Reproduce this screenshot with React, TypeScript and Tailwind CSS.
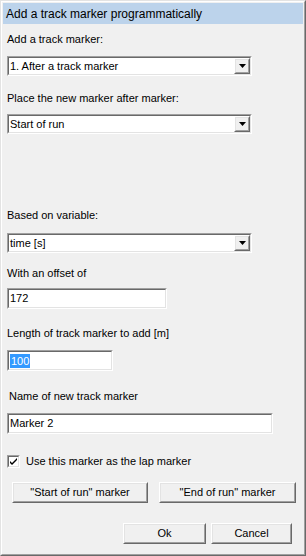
import type { ReactNode } from "react";

function Sunken({ className = "", children }: { className?: string; children: ReactNode }) {
  return (
    <div className={`border border-t-[#a0a0a0] border-l-[#a0a0a0] border-r-white border-b-white ${className}`}>
      <div className="flex h-full w-full items-center border border-t-[#696969] border-l-[#696969] border-r-[#e3e3e3] border-b-[#e3e3e3] bg-white">
        {children}
      </div>
    </div>
  );
}

function Raised({ className = "", children }: { className?: string; children: ReactNode }) {
  return (
    <div className={`border border-t-white border-l-white border-r-[#696969] border-b-[#696969] bg-[#f0f0f0] ${className}`}>
      <div className="flex h-full w-full items-center justify-center border border-t-[#e3e3e3] border-l-[#e3e3e3] border-r-[#a0a0a0] border-b-[#a0a0a0]">
        {children}
      </div>
    </div>
  );
}

function Combo({ value, className = "" }: { value: string; className?: string }) {
  return (
    <Sunken className={`h-[20px] w-[245px] ${className}`}>
      <span className="flex-1 truncate pl-[1px] text-[11px] leading-[13px]">{value}</span>
      <Raised className="h-full w-[16px] shrink-0">
        <svg width="7" height="4" viewBox="0 0 7 4">
          <path d="M0 0h7L3.5 4z" fill="#000" />
        </svg>
      </Raised>
    </Sunken>
  );
}

function Label({ children, className = "" }: { children: ReactNode; className?: string }) {
  return <div className={`h-[13px] text-[11px] leading-[13px] ${className}`}>{children}</div>;
}

function Button({ children, className = "" }: { children: ReactNode; className?: string }) {
  return (
    <Raised className={`h-[21px] ${className}`}>
      <span className="text-[11px] leading-[13px]">{children}</span>
    </Raised>
  );
}

export default function App() {
  return (
    <div className="h-[556px] w-[306px] border border-t-[#e3e3e3] border-l-[#e3e3e3] border-r-[#696969] border-b-[#696969] bg-[#f0f0f0] font-['Liberation_Sans',Arial,sans-serif] text-black">
      <div className="flex h-full flex-col border border-t-white border-l-white border-r-[#a0a0a0] border-b-[#a0a0a0] p-px">
        <div className="flex h-[21px] items-center bg-[#bcd3eb] pl-[3px] text-[12px]">
          Add a track marker programmatically
        </div>

        <div className="flex flex-col pl-[4px]">
          <Label className="mt-[9px]">Add a track marker:</Label>
          <Combo className="mt-[10px]" value="1. After a track marker" />

          <Label className="mt-[16px]">Place the new marker after marker:</Label>
          <Combo className="mt-[9px]" value="Start of run" />

          <Label className="mt-[75px]">Based on variable:</Label>
          <Combo className="mt-[11px]" value="time [s]" />

          <Label className="mt-[14px]">With an offset of</Label>
          <Sunken className="mt-[8px] h-[21px] w-[160px]">
            <span className="pl-[1px] text-[11px] leading-[13px]">172</span>
          </Sunken>

          <Label className="mt-[18px]">Length of track marker to add [m]</Label>
          <Sunken className="mt-[10px] h-[21px] w-[106px]">
            <span className="ml-[1px] bg-[#3399ff] px-px text-[11px] leading-[14px] text-white">100</span>
          </Sunken>

          <Label className="mt-[19px] pl-[2px]">Name of new track marker</Label>
          <Sunken className="mt-[10px] h-[21px] w-[266px]">
            <span className="pl-[1px] text-[11px] leading-[13px]">Marker 2</span>
          </Sunken>

          <div className="mt-[21px] flex h-[13px] items-center gap-[6px]">
            <Sunken className="h-[13px] w-[13px]">
              <svg width="9" height="9" viewBox="0 0 9 9">
                <path d="M1 4l2 2 5-5v2L3 8 1 6z" fill="#000" />
              </svg>
            </Sunken>
            <span className="text-[11px] leading-[13px]">Use this marker as the lap marker</span>
          </div>

          <div className="mt-[14px] flex gap-[11px] pl-[5px]">
            <Button className="w-[136px]">"Start of run" marker</Button>
            <Button className="w-[137px]">"End of run" marker</Button>
          </div>

          <div className="mt-[20px] flex gap-[5px] pl-[116px]">
            <Button className="w-[83px]">Ok</Button>
            <Button className="w-[81px]">Cancel</Button>
          </div>
        </div>
      </div>
    </div>
  );
}
